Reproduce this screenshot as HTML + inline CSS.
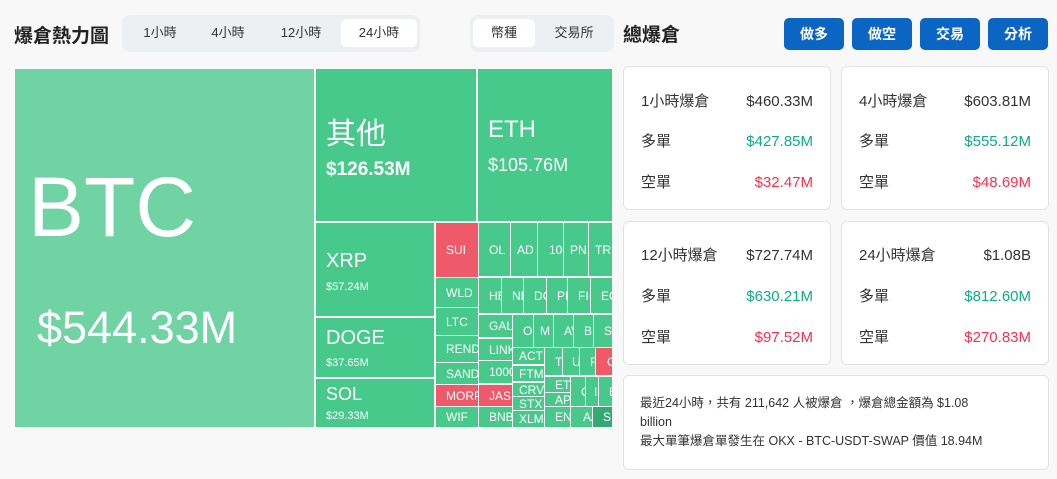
<!DOCTYPE html>
<html><head><meta charset="utf-8"><style>
*{margin:0;padding:0;box-sizing:border-box}
body{width:1057px;height:479px;background:#f8f8f8;font-family:"Liberation Sans","Noto Sans CJK TC",sans-serif;position:relative;overflow:hidden;color:#222}
.a{position:absolute}
.t{position:absolute;background:#48c98c;color:#fff;overflow:hidden;white-space:nowrap;display:flex;align-items:center;padding-left:6px;font-size:12px}
.r{background:#ef5a6a}
.seg{position:absolute;background:#edf0f3;border-radius:8px}
.seg span{position:absolute;top:4px;height:28px;line-height:28px;text-align:center;font-size:13px;color:#333;border-radius:6px}
.on{background:#fff}
.btn{position:absolute;top:18px;width:60px;height:32px;background:#0a66c2;color:#fff;border-radius:5px;font-size:14px;font-weight:bold;text-align:center;line-height:32px}
.card{position:absolute;background:#fff;border:1px solid #e3e3e3;border-radius:6px}
.row{position:absolute;left:17px;right:17px;height:22px;font-size:15px;color:#333;display:flex;justify-content:space-between;align-items:center}
.row span{line-height:22px;display:block;height:22px}
.g{color:#12a88a}.rd{color:#f0334f}
</style></head><body>
<div class="a" style="left:14px;top:21px;font-size:19px;font-weight:bold">爆倉熱力圖</div>
<div class="seg" style="left:122px;top:15px;width:298px;height:37px">
<span style="left:4px;width:68px">1小時</span><span style="left:72px;width:68px">4小時</span><span style="left:140px;width:78px">12小時</span><span class="on" style="left:219px;width:76px">24小時</span></div>
<div class="seg" style="left:470px;top:15px;width:144px;height:37px">
<span class="on" style="left:3px;width:62px">幣種</span><span style="left:66px;width:76px">交易所</span></div>

<div class="t" style="left:15px;top:69px;width:299px;height:358px;background:#6fd3a4;display:block;padding:0">
<div class="a" style="left:13px;top:90px;font-size:84px">BTC</div>
<div class="a" style="left:22px;top:233px;font-size:45px">$544.33M</div></div>
<div class="t" style="left:316px;top:69px;width:160px;height:152px;display:block;padding:0">
<div class="a" style="left:10px;top:40px;font-size:30px">其他</div>
<div class="a" style="left:10px;top:90px;font-size:19px;font-weight:bold">$126.53M</div></div>
<div class="t" style="left:478px;top:69px;width:134px;height:152px;display:block;padding:0">
<div class="a" style="left:10px;top:47px;font-size:24px">ETH</div>
<div class="a" style="left:10px;top:86px;font-size:18px">$105.76M</div></div>
<div class="t" style="left:316px;top:223px;width:118px;height:93px;display:block;padding:0">
<div class="a" style="left:10px;top:27px;font-size:20px">XRP</div>
<div class="a" style="left:10px;top:58px;font-size:11px">$57.24M</div></div>
<div class="t" style="left:316px;top:318px;width:118px;height:59px;display:block;padding:0">
<div class="a" style="left:10px;top:9px;font-size:20px">DOGE</div>
<div class="a" style="left:10px;top:39px;font-size:11px">$37.65M</div></div>
<div class="t" style="left:316px;top:379px;width:118px;height:48px;display:block;padding:0">
<div class="a" style="left:10px;top:5px;font-size:18px">SOL</div>
<div class="a" style="left:10px;top:31px;font-size:11px">$29.33M</div></div>

<div class="t r" style="left:436px;top:223px;width:42px;height:54px;padding-left:10px">SUI</div>
<div class="t" style="left:436px;top:278px;width:42px;height:29px;padding-left:10px">WLD</div>
<div class="t" style="left:436px;top:308px;width:42px;height:27px;padding-left:10px">LTC</div>
<div class="t" style="left:436px;top:336px;width:42px;height:26px;padding-left:10px">REND</div>
<div class="t" style="left:436px;top:363px;width:42px;height:21px;padding-left:10px">SAND</div>
<div class="t r" style="left:436px;top:385px;width:42px;height:21px;padding-left:10px">MORP</div>
<div class="t" style="left:436px;top:407px;width:42px;height:20px;padding-left:10px">WIF</div>

<div class="t" style="left:479px;top:223px;width:31px;height:53px;padding-left:10px">OL</div>
<div class="t" style="left:511px;top:223px;width:26px;height:53px">AD</div>
<div class="t" style="left:538px;top:223px;width:25px;height:53px;padding-left:11px">100</div>
<div class="t" style="left:564px;top:223px;width:24px;height:53px">PN</div>
<div class="t" style="left:589px;top:223px;width:23px;height:53px">TR</div>
<div class="t" style="left:479px;top:278px;width:22px;height:35px;padding-left:10px">HE</div>
<div class="t" style="left:502px;top:278px;width:21px;height:35px;padding-left:10px">NE</div>
<div class="t" style="left:524px;top:278px;width:22px;height:35px;padding-left:10px">DC</div>
<div class="t" style="left:547px;top:278px;width:20px;height:35px;padding-left:10px">PE</div>
<div class="t" style="left:568px;top:278px;width:22px;height:35px;padding-left:10px">FI</div>
<div class="t" style="left:591px;top:278px;width:21px;height:35px;padding-left:10px">EC</div>
<div class="t" style="left:479px;top:315px;width:33px;height:22px;padding-left:10px">GAL</div>
<div class="t" style="left:479px;top:339px;width:33px;height:21px;padding-left:10px">LINK</div>
<div class="t" style="left:479px;top:361px;width:33px;height:22px;padding-left:10px">1000</div>
<div class="t r" style="left:479px;top:385px;width:33px;height:21px;padding-left:10px">JASI</div>
<div class="t" style="left:479px;top:407px;width:33px;height:20px;padding-left:10px">BNB</div>
<div class="t" style="left:513px;top:315px;width:20px;height:32px;padding-left:10px">OI</div>
<div class="t" style="left:534px;top:315px;width:19px;height:32px">M</div>
<div class="t" style="left:554px;top:315px;width:19px;height:32px;padding-left:10px">AV</div>
<div class="t" style="left:574px;top:315px;width:19px;height:32px;padding-left:10px">B</div>
<div class="t" style="left:594px;top:315px;width:18px;height:32px;padding-left:10px">S</div>
<div class="t" style="left:513px;top:348px;width:31px;height:16px">ACT</div>
<div class="t" style="left:513px;top:366px;width:31px;height:15px">FTM</div>
<div class="t" style="left:513px;top:383px;width:31px;height:13px">CRV</div>
<div class="t" style="left:513px;top:397px;width:31px;height:13px">STX</div>
<div class="t" style="left:513px;top:411px;width:31px;height:16px">XLM</div>
<div class="t" style="left:545px;top:348px;width:17px;height:27px;padding-left:10px">T</div>
<div class="t" style="left:563px;top:348px;width:16px;height:27px;padding-left:9px">U</div>
<div class="t" style="left:580px;top:348px;width:15px;height:27px;padding-left:10px">R</div>
<div class="t r" style="left:596px;top:348px;width:16px;height:27px;padding-left:11px">O</div>
<div class="t" style="left:545px;top:377px;width:25px;height:15px;padding-left:10px">ETC</div>
<div class="t" style="left:545px;top:393px;width:25px;height:13px;padding-left:10px">AP</div>
<div class="t" style="left:545px;top:407px;width:25px;height:20px;padding-left:10px">EN</div>
<div class="t" style="left:571px;top:377px;width:14px;height:29px;padding-left:10px">C</div>
<div class="t" style="left:586px;top:377px;width:12px;height:29px;padding-left:8px">I</div>
<div class="t" style="left:599px;top:377px;width:13px;height:29px;padding-left:10px">E</div>
<div class="t" style="left:571px;top:407px;width:21px;height:20px;padding-left:12px">AA</div>
<div class="t" style="left:593px;top:407px;width:19px;height:20px;background:#35a877;padding-left:10px">SI</div>

<div class="a" style="left:623px;top:20px;font-size:19px;font-weight:bold">總爆倉</div>
<div class="btn" style="left:784px">做多</div><div class="btn" style="left:852px">做空</div>
<div class="btn" style="left:920px">交易</div><div class="btn" style="left:988px">分析</div>

<div class="card" style="left:623px;top:66px;width:208px;height:144px">
<div class="row" style="top:24px"><span>1小時爆倉</span><span>$460.33M</span></div>
<div class="row" style="top:64px"><span>多單</span><span class="g">$427.85M</span></div>
<div class="row" style="top:105px"><span>空單</span><span class="rd">$32.47M</span></div></div>
<div class="card" style="left:841px;top:66px;width:208px;height:144px">
<div class="row" style="top:24px"><span>4小時爆倉</span><span>$603.81M</span></div>
<div class="row" style="top:64px"><span>多單</span><span class="g">$555.12M</span></div>
<div class="row" style="top:105px"><span>空單</span><span class="rd">$48.69M</span></div></div>
<div class="card" style="left:623px;top:221px;width:208px;height:144px">
<div class="row" style="top:23px"><span>12小時爆倉</span><span>$727.74M</span></div>
<div class="row" style="top:64px"><span>多單</span><span class="g">$630.21M</span></div>
<div class="row" style="top:105px"><span>空單</span><span class="rd">$97.52M</span></div></div>
<div class="card" style="left:841px;top:221px;width:208px;height:144px">
<div class="row" style="top:23px"><span>24小時爆倉</span><span>$1.08B</span></div>
<div class="row" style="top:64px"><span>多單</span><span class="g">$812.60M</span></div>
<div class="row" style="top:105px"><span>空單</span><span class="rd">$270.83M</span></div></div>
<div class="card" style="left:623px;top:375px;width:426px;height:95px;font-size:12.5px;color:#333;line-height:19px;padding:18px 0 0 16px">
最近24小時，共有 211,642 人被爆倉 ，爆倉總金額為 $1.08<br>billion<br>最大單筆爆倉單發生在 OKX - BTC-USDT-SWAP 價值 18.94M</div>
</body></html>
